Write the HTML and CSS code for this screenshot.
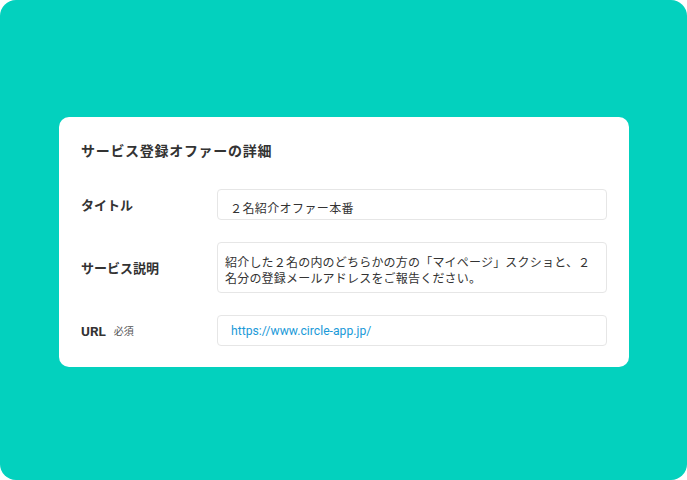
FILE: index.html
```html
<!DOCTYPE html>
<html lang="ja">
<head>
<meta charset="utf-8">
<link rel="stylesheet" href="styles.css">
</head>
<body>
<div class="frame">
  <section class="card">
    <h1 class="card-title">サービス登録オファーの詳細</h1>
    <div class="form">
      <div class="row">
        <div class="label">タイトル</div>
        <div class="field field-title">２名紹介オファー本番</div>
      </div>
      <div class="row">
        <div class="label">サービス説明</div>
        <div class="field field-multi">紹介した２名の内のどちらかの方の「マイページ」スクショと、２<br>名分の登録メールアドレスをご報告ください。</div>
      </div>
      <div class="row">
        <div class="label"><span class="label-en">URL</span><span class="required">必須</span></div>
        <div class="field field-url">https://www.circle-app.jp/</div>
      </div>
    </div>
  </section>
</div>
</body>
</html>
```
FILE: styles.css
```css
* { box-sizing: border-box; }
html, body {
  margin: 0;
  padding: 0;
  background: #ffffff;
}
body {
  font-family: "Noto Sans CJK JP", "Noto Sans", sans-serif;
  color: #333333;
}
.frame {
  width: 687px;
  height: 480px;
  background: #03d1be;
  border-radius: 16px;
  padding: 117px 58px 0 59px;
  display: flex;
  align-items: flex-start;
}
.card {
  width: 570px;
  height: 250px;
  background: #ffffff;
  border-radius: 10px;
  padding: 23px 22px 20px 22px;
}
.card-title {
  margin: 0;
  font-size: 14px;
  line-height: 20px;
  font-weight: 700;
  letter-spacing: 0.7px;
  color: #333333;
}
.form {
  margin-top: 29px;
  display: flex;
  flex-direction: column;
  gap: 22px;
}
.row {
  display: flex;
  align-items: center;
}
.label {
  width: 136px;
  flex: none;
  font-size: 13px;
  line-height: 18px;
  font-weight: 700;
  color: #333333;
  display: flex;
  align-items: center;
}
.label-en {
  font-family: "Roboto", "Noto Sans", sans-serif;
  font-weight: 700;
  font-size: 13.5px;
}
.required {
  margin-left: 8px;
  font-size: 10px;
  font-weight: 400;
  color: #555555;
}
.field {
  width: 390px;
  border: 1px solid #e6e6e6;
  border-radius: 4px;
  font-size: 12px;
  line-height: 16px;
  letter-spacing: 0.2px;
  color: #333333;
  background: #ffffff;
}
.field-title {
  height: 31px;
  padding: 10px 12px 4px 12px;
  letter-spacing: 0.4px;
}
.field-multi {
  height: 51px;
  padding: 11px 7px 6px 7px;
}
.field-url {
  height: 31px;
  padding: 7px 13px;
  font-family: "Roboto", "Noto Sans", sans-serif;
  font-size: 12.2px;
  letter-spacing: 0;
  color: #1b9ad8;
}
```
